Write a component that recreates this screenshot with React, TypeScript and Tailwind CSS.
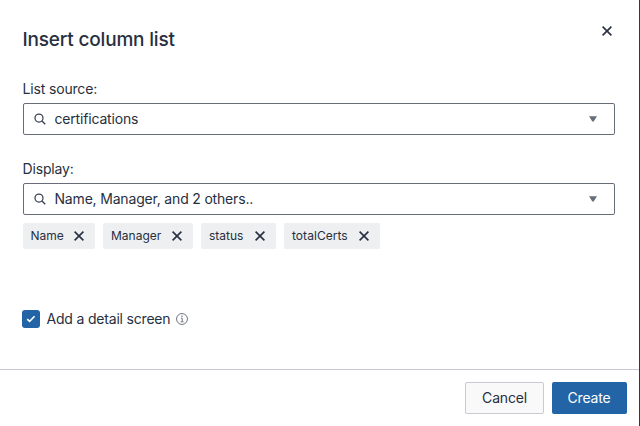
import React from "react";

function Cross({ size, stroke }: { size: number; stroke: number }) {
  return (
    <svg width={size} height={size} viewBox="0 0 10 10" fill="none" stroke="#272f40" strokeWidth={stroke} className="block shrink-0">
      <path d="M0.6 0.6 9.4 9.4M9.4 0.6 0.6 9.4" />
    </svg>
  );
}

function SelectField({ label, value }: { label: string; value: string }) {
  return (
    <div>
      <div className="-ml-[0.5px] h-5 text-[14px] leading-5 tracking-[-0.16px]">{label}</div>
      <div className="mt-1 flex h-8 items-center rounded-[2px] border border-[#676d79] pl-[10px] pr-[17px]">
        <svg width="12" height="12" viewBox="0 0 12 12" fill="none" stroke="#3a4252" strokeWidth="1.25" className="shrink-0">
          <circle cx="5" cy="5" r="4" />
          <path d="M8 8l3.2 3.2" strokeWidth="1.4" />
        </svg>
        <span className="ml-[8.5px] flex-1 whitespace-nowrap text-[14px] leading-5 tracking-[-0.18px]">{value}</span>
        <svg width="8" height="6" viewBox="0 0 8 6" className="shrink-0">
          <path d="M0 0.2h8L4.8 5.3q-.8.9-1.6 0z" fill="#676d79" />
        </svg>
      </div>
    </div>
  );
}

function Tag({ label, className }: { label: string; className: string }) {
  return (
    <div className={`flex h-[26px] items-center justify-between rounded-[2px] bg-[#eeeff1] pr-[11px] text-[12px] ${className}`}>
      <span>{label}</span>
      <Cross size={10} stroke={1.6} />
    </div>
  );
}

export default function App() {
  return (
    <div className="flex h-[426px] w-[640px] flex-col overflow-hidden border-r border-[#36383b] bg-white font-['Inter','Liberation_Sans',sans-serif] text-[#272f40]">
      <header className="flex h-[79px] items-start justify-between pl-[22.5px] pr-[27px] pt-[26px]">
        <h1 className="mt-px text-[19px] font-medium leading-[26px] tracking-[-0.18px]">Insert column list</h1>
        <button aria-label="Close">
          <Cross size={10} stroke={1.6} />
        </button>
      </header>
      <main className="flex-1 pl-[23px] pr-6">
        <SelectField label="List source:" value="certifications" />
        <div className="h-6" />
        <SelectField label="Display:" value="Name, Manager, and 2 others.." />
        <div className="mt-2 flex gap-2">
          <Tag label="Name" className="w-[72px] pl-[7.4px]" />
          <Tag label="Manager" className="w-[90px] pl-2" />
          <Tag label="status" className="w-[75px] pl-2" />
          <Tag label="totalCerts" className="w-[96px] pl-2 tracking-[0.05px]" />
        </div>
        <label className="-ml-px mt-[60px] flex h-5 items-center">
          <span className="flex size-[18px] items-center justify-center rounded-[3px] bg-[#2264a5]">
            <svg width="10" height="8" viewBox="0 0 10 8" fill="none" stroke="white" strokeWidth="1.6">
              <path d="M1.2 4.1l2.4 2.3L8.6 1.2" />
            </svg>
          </span>
          <span className="ml-[6.5px] text-[14px] leading-5 tracking-[-0.19px]">Add a detail screen</span>
          <svg width="12" height="12" viewBox="0 0 12 12" fill="none" stroke="#6f7580" className="ml-[6px]">
            <circle cx="6" cy="6" r="5.45" strokeWidth="1" />
            <path d="M4.9 5.2H6.2V8.7M4.6 8.8H7.6" strokeWidth="1" />
            <circle cx="6" cy="3.2" r="0.8" fill="#6f7580" stroke="none" />
          </svg>
        </label>
      </main>
      <footer className="flex h-[57px] justify-end gap-2 border-t border-[#c7cad1] pr-3 pt-3 text-[14px] tracking-[-0.19px]">
        <button className="h-8 w-[79px] rounded-[2px] border border-[#c7cad1] bg-[#f9f9fa] pb-px">Cancel</button>
        <button className="h-8 w-[75px] rounded-[2px] bg-[#2264a5] pb-px pr-px text-white">Create</button>
      </footer>
    </div>
  );
}
